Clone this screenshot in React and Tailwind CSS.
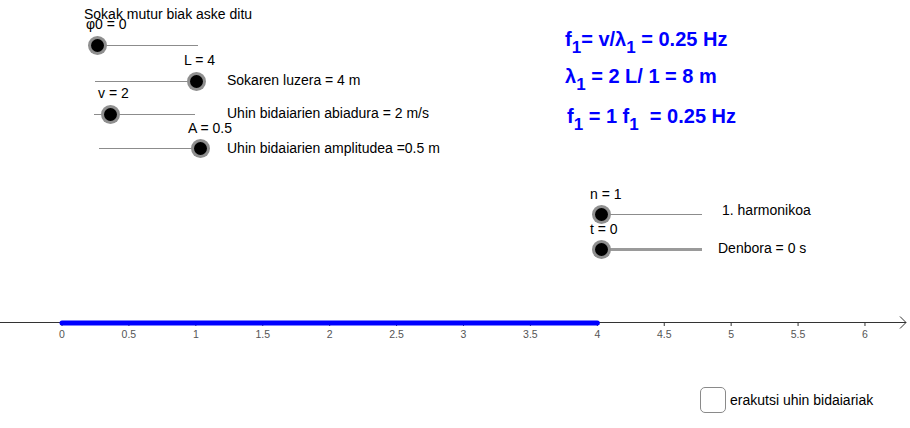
import React from 'react';

const FONT = { fontFamily: '"Liberation Sans", Arial, sans-serif' };

function Label({ x, y, children, className = '' }) {
  return (
    <div
      className={`absolute whitespace-pre text-[14px] leading-[16px] text-black ${className}`}
      style={{ left: x, top: y }}
    >
      {children}
    </div>
  );
}

function Slider({ x1, x2, y, knob, thick = false }) {
  return (
    <>
      <div
        className={`absolute ${thick ? 'h-[3px] bg-[#9a9a9a]' : 'h-px bg-[#8c8c8c]'}`}
        style={{ left: x1, top: y - (thick ? 1.5 : 0.5), width: x2 - x1 }}
      />
      <div
        className="absolute flex h-[19px] w-[19px] items-center justify-center rounded-full bg-[#8f8f8f]"
        style={{ left: knob - 9.5, top: y - 9.5 }}
      >
        <div className="h-[13px] w-[13px] rounded-full bg-black" />
      </div>
    </>
  );
}

function Sub({ children }) {
  return <span className="align-[-7px] text-[17px]">{children}</span>;
}

const ticks = [0, 0.5, 1, 1.5, 2, 2.5, 3, 3.5, 4, 4.5, 5, 5.5, 6];
const X0 = 62;
const UNIT = 133.83;

export default function App() {
  return (
    <div className="relative h-[428px] w-[910px] overflow-hidden bg-white" style={FONT}>
      <Label x={84} y={6}>Sokak mutur biak aske ditu</Label>
      <Label x={86} y={16}>φ0 = 0</Label>
      <Slider x1={97} x2={198} y={45} knob={97} />

      <Label x={184} y={52}>L = 4</Label>
      <Slider x1={95} x2={196} y={81} knob={196} />
      <Label x={227} y={72}>Sokaren luzera = 4 m</Label>

      <Label x={98} y={85}>v = 2</Label>
      <Slider x1={94} x2={195} y={114} knob={110} />
      <Label x={227} y={105}>Uhin bidaiarien abiadura = 2 m/s</Label>

      <Label x={188} y={120}>A = 0.5</Label>
      <Slider x1={99} x2={200} y={148.5} knob={200} />
      <Label x={227} y={140}>Uhin bidaiarien amplitudea =0.5 m</Label>

      {/* formulas */}
      <div className="absolute left-[565px] top-[28px] flex flex-col gap-[15px] whitespace-pre text-[20px] font-bold leading-[22px] text-[#0000ff]">
        <div className="h-[22px]">
          f<Sub>1</Sub>= v/λ<Sub>1</Sub> = 0.25 Hz
        </div>
        <div className="h-[22px]">
          λ<Sub>1</Sub> = 2 L/ 1 = 8 m
        </div>
        <div className="mt-[3px] h-[22px] pl-[2px]">
          f<Sub>1</Sub> = 1 f<Sub>1</Sub>  = 0.25 Hz
        </div>
      </div>

      <Label x={590} y={186}>n = 1</Label>
      <Slider x1={601} x2={702} y={214} knob={601} />
      <Label x={722} y={202}>1. harmonikoa</Label>

      <Label x={590} y={221}>t = 0</Label>
      <Slider x1={601} x2={702} y={249.5} knob={601} thick />
      <Label x={718} y={240}>Denbora = 0 s</Label>

      {/* x axis */}
      <svg className="absolute left-0 top-[300px]" width="910" height="50" viewBox="0 300 910 50">
        <line x1="0" y1="322.5" x2="906" y2="322.5" stroke="#333" strokeWidth="1" />
        <polyline points="900,316.5 906,322.5 900,328.5" fill="none" stroke="#333" strokeWidth="1" />
        {ticks.map((t) => {
          const x = X0 + t * UNIT;
          return (
            <g key={t}>
              <line x1={x} y1="322" x2={x} y2="326" stroke="#333" strokeWidth="1" />
              <text x={x} y="337.5" textAnchor="middle" fontSize="10.5" fill="#555" style={FONT}>
                {t}
              </text>
            </g>
          );
        })}
        <line x1={X0} y1="323" x2={X0 + 4 * UNIT} y2="323" stroke="#0000ff" strokeWidth="5" strokeLinecap="round" />
      </svg>

      {/* checkbox */}
      <div className="absolute left-[700px] top-[387px] flex items-center gap-[4px]">
        <div className="h-[26px] w-[26px] rounded-[5px] border-[1.5px] border-[#8a8a8a] bg-white" />
        <span className="whitespace-pre text-[14px] leading-[16px] text-black">erakutsi uhin bidaiariak</span>
      </div>
    </div>
  );
}
